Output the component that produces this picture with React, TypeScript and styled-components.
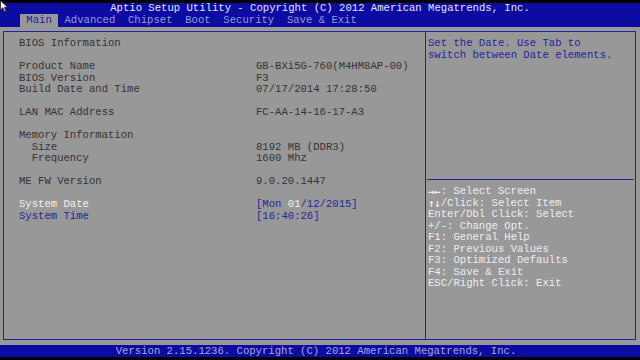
import React from 'react';
import styled, { createGlobalStyle } from 'styled-components';

const Global = createGlobalStyle`
  html, body { margin: 0; padding: 0; background: #000; }
  body { width: 640px; height: 360px; overflow: hidden; }
`;

const BLUE = '#0c0ca2';
const GRAY = '#989898';
const LINE = '#22229a';

const Screen = styled.div`
  position: relative;
  width: 640px;
  height: 360px;
  background: #000;
  display: flex;
  flex-direction: column;
  font-family: "Liberation Mono", "DejaVu Sans Mono", monospace;
  font-size: 10.6px;
  line-height: 11.5px;
`;

const Header = styled.header`
  margin-top: 3px;
  height: 24px;
  background: ${BLUE};
  display: flex;
  flex-direction: column;
`;

const Title = styled.div`
  height: 11px;
  line-height: 11px;
  text-align: center;
  color: #e4e4f2;
`;

const Tabs = styled.nav`
  height: 13px;
  display: flex;
  padding-left: 20px;
`;

const Tab = styled.div<{ $active?: boolean }>`
  padding: 0 1ch;
  line-height: 13px;
  background: ${(p) => (p.$active ? GRAY : 'transparent')};
  color: ${(p) => (p.$active ? '#1e1e98' : '#9a9ad2')};
`;

const Body = styled.main`
  flex: 1;
  background: ${GRAY};
  padding: 4px 4px 5px 3px;
  display: flex;
`;

const Frame = styled.div`
  flex: 1;
  border: 1px solid ${LINE};
  display: grid;
  grid-template-columns: 422px 1fr;
`;

const LeftPanel = styled.section`
  border-right: 1px solid ${LINE};
  padding: 6px 0 0 15px;
`;

const Row = styled.div`
  display: grid;
  grid-template-columns: 237px 1fr;
  height: 11.5px;
  white-space: pre;
`;

const Gap = styled.div`
  height: 11.5px;
`;

const Label = styled.span<{ $tone?: 'dark' | 'blue' | 'white'; $indent?: boolean }>`
  padding-left: ${(p) => (p.$indent ? '2ch' : '0')};
  color: ${(p) => (p.$tone === 'blue' ? '#24249c' : p.$tone === 'white' ? '#f0f0f0' : '#333333')};
`;

const Value = styled.span<{ $tone?: 'dark' | 'blue' }>`
  color: ${(p) => (p.$tone === 'blue' ? '#24249c' : '#333333')};
`;

const Hi = styled.span`
  color: #f0f0f0;
`;

const RightPanel = styled.aside`
  display: flex;
  flex-direction: column;
`;

const HelpTop = styled.div`
  height: 147px;
  padding: 6px 0 0 2px;
  box-sizing: border-box;
  color: #24249c;
`;

const Divider = styled.hr`
  margin: 0 1px;
  border: none;
  border-top: 1px solid ${LINE};
  height: 0;
`;

const HelpKeys = styled.div`
  padding: 6px 0 0 2px;
  color: #eeeeee;
`;

const HelpLine = styled.div`
  height: 11.5px;
  white-space: pre;
`;

const Arrows = styled.span`
  display: inline-block;
  width: 12.7px;
  overflow: hidden;
  vertical-align: top;
  font-family: "DejaVu Sans Mono", monospace;
  font-weight: bold;
  font-size: 10.6px;
  letter-spacing: -0.3px;
`;

const Footer = styled.footer`
  height: 12px;
  line-height: 12px;
  background: ${BLUE};
  text-align: center;
  color: #a6a6d6;
  padding-right: 8px;
  margin-bottom: 3px;
`;

const Cursor = styled.svg`
  position: absolute;
  left: 0;
  top: 0;
`;

type Item =
  | { gap: true }
  | { label: string; value?: React.ReactNode; indent?: boolean; tone?: 'dark' | 'blue' | 'white'; vtone?: 'dark' | 'blue' };

const items: Item[] = [
  { label: 'BIOS Information' },
  { gap: true },
  { label: 'Product Name', value: 'GB-BXi5G-760(M4HM8AP-00)' },
  { label: 'BIOS Version', value: 'F3' },
  { label: 'Build Date and Time', value: '07/17/2014 17:28:50' },
  { gap: true },
  { label: 'LAN MAC Address', value: 'FC-AA-14-16-17-A3' },
  { gap: true },
  { label: 'Memory Information' },
  { label: 'Size', indent: true, value: '8192 MB (DDR3)' },
  { label: 'Frequency', indent: true, value: '1600 Mhz' },
  { gap: true },
  { label: 'ME FW Version', value: '9.0.20.1447' },
  { gap: true },
  {
    label: 'System Date',
    tone: 'white',
    vtone: 'blue',
    value: (
      <>
        [Mon <Hi>01</Hi>/12/2015]
      </>
    ),
  },
  { label: 'System Time', tone: 'blue', vtone: 'blue', value: '[16:40:26]' },
];

const keys: React.ReactNode[] = [
  <>
    <Arrows>→←</Arrows>: Select Screen
  </>,
  <>
    <Arrows>↑↓</Arrows>/Click: Select Item
  </>,
  'Enter/Dbl Click: Select',
  '+/-: Change Opt.',
  'F1: General Help',
  'F2: Previous Values',
  'F3: Optimized Defaults',
  'F4: Save & Exit',
  'ESC/Right Click: Exit',
];

const tabs = ['Main', 'Advanced', 'Chipset', 'Boot', 'Security', 'Save & Exit'];

export default function App() {
  return (
    <>
      <Global />
      <Screen>
        <Header>
          <Title>Aptio Setup Utility - Copyright (C) 2012 American Megatrends, Inc.</Title>
          <Tabs>
            {tabs.map((t, i) => (
              <Tab key={t} $active={i === 0}>
                {t}
              </Tab>
            ))}
          </Tabs>
        </Header>
        <Body>
          <Frame>
            <LeftPanel>
              {items.map((it, i) =>
                'gap' in it ? (
                  <Gap key={i} />
                ) : (
                  <Row key={i}>
                    <Label $tone={it.tone} $indent={it.indent}>
                      {it.label}
                    </Label>
                    <Value $tone={it.vtone}>{it.value}</Value>
                  </Row>
                )
              )}
            </LeftPanel>
            <RightPanel>
              <HelpTop>
                <HelpLine>Set the Date. Use Tab to</HelpLine>
                <HelpLine>switch between Date elements.</HelpLine>
              </HelpTop>
              <Divider />
              <HelpKeys>
                {keys.map((k, i) => (
                  <HelpLine key={i}>{k}</HelpLine>
                ))}
              </HelpKeys>
            </RightPanel>
          </Frame>
        </Body>
        <Footer>Version 2.15.1236. Copyright (C) 2012 American Megatrends, Inc.</Footer>
        <Cursor width="9" height="13" viewBox="0 0 9 13">
          <path d="M0.5 0.5 L0.5 10 L2.8 7.8 L4.6 11.8 L6 11.2 L4.3 7.3 L7.5 7.3 Z" fill="#fff" stroke="#222" strokeWidth="0.8" />
        </Cursor>
      </Screen>
    </>
  );
}
